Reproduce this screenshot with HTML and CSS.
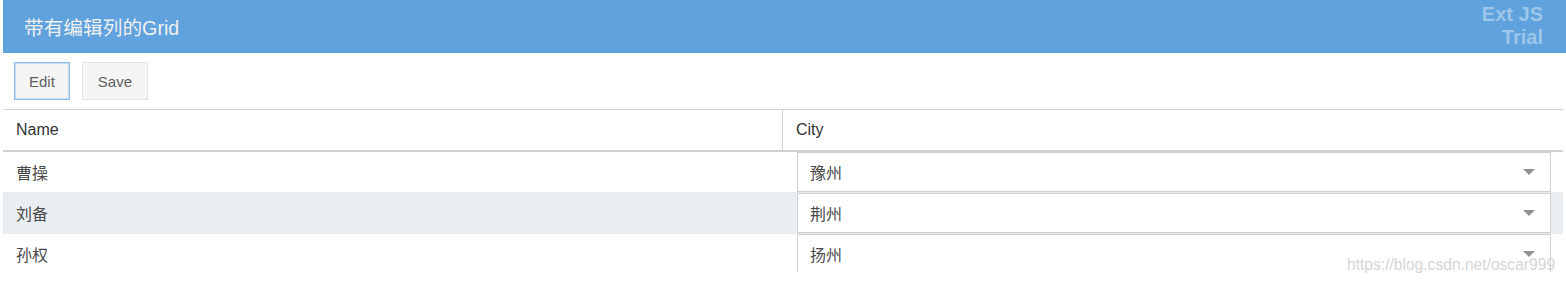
FILE: index.html
```html
<!DOCTYPE html>
<html lang="zh-CN">
<head>
    <meta charset="UTF-8">
    <meta name="viewport" content="width=device-width, initial-scale=1.0">
    <title>带有编辑列的Grid</title>
    <link rel="stylesheet" href="styles.css">
</head>

<body>
    <div class="panel">
        <div class="panel-header">
            <span class="panel-title">带有编辑列的Grid</span>
            <!-- trial badge sits over the header -->
            <div class="trial">Ext JS<br>Trial</div>
        </div>
        <div class="toolbar">
            <button class="btn focused">Edit</button>
            <button class="btn">Save</button>
        </div>
        <div class="grid">
            <div class="grid-head">
                <div class="col col-name">Name</div>
                <div class="col col-city">City</div>
            </div>
            <div class="grid-body">
                <div class="row">
                    <div class="cell col-name">曹操</div>
                    <div class="cell col-city">
                        <div class="combo"><span class="combo-value">豫州</span><span class="combo-trigger"></span></div>
                    </div>
                </div>
                <div class="row alt">
                    <div class="cell col-name">刘备</div>
                    <div class="cell col-city">
                        <div class="combo"><span class="combo-value">荆州</span><span class="combo-trigger"></span></div>
                    </div>
                </div>
                <div class="row">
                    <div class="cell col-name">孙权</div>
                    <div class="cell col-city">
                        <div class="combo"><span class="combo-value">扬州</span><span class="combo-trigger"></span></div>
                    </div>
                </div>
            </div>
        </div>
    </div>
    <div class="watermark">https://blog.csdn.net/oscar999</div>
</body>

</html>
```

FILE: styles.css
```css
html, body {
    margin: 0;
    background: white;
}
body {
    position: relative;
    height: 285px;
    overflow: hidden;
    font-family: "Liberation Sans", Arial, "Noto Sans CJK SC", sans-serif;
    color: #404040;
}

.panel {
    margin-left: 3px;
    width: 1560px;
}

.panel-header {
    position: relative;
    display: flex;
    align-items: center;
    height: 53px;
    margin-right: -3px;
    padding-left: 21px;
    background-color: #5fa2dd;
}

.panel-title {
    color: #f0f0f0;
    font-size: 19.7px;
}

.trial {
    position: absolute;
    right: 23px;
    top: 3px;
    color: #9ec6ea;
    font-family: "Liberation Sans", Arial, sans-serif;
    font-weight: bold;
    font-size: 20px;
    line-height: 23px;
    text-align: right;
}

.toolbar {
    display: flex;
    gap: 12px;
    height: 57px;
    padding: 9px 0 0 11px;
    box-sizing: border-box;
    border-bottom: 1px solid #d0d0d0;
}

.btn {
    height: 38px;
    padding: 0 15px;
    background-color: #f5f5f5;
    border: 1px solid #e4e4e4;
    color: #606060;
    font-family: inherit;
    font-size: 15px;
}

.btn.focused {
    padding: 0 14px;
    border-color: #8fbceb;
    box-shadow: inset 0 0 0 1px #c5ddf4;
}

.grid-head {
    display: flex;
    height: 40px;
    border-bottom: 2px solid #d0d0d0;
    color: #333;
    font-size: 16px;
}

.col {
    display: flex;
    align-items: center;
    padding-left: 13px;
    box-sizing: border-box;
}

.col-name {
    width: 780px;
}

.grid-head .col-name {
    border-right: 1px solid #d0d0d0;
}

.col-city {
    flex: 1;
}

.grid-body {
    height: 120px;
    overflow: hidden;
}

.row {
    display: flex;
    height: 41px;
    border-bottom: 1px solid #e9e9e9;
    box-sizing: border-box;
    font-size: 16px;
    color: #4a4a4a;
}

.row.alt {
    background-color: #e9eef2;
}

.cell {
    display: flex;
    align-items: center;
    padding-left: 13px;
    box-sizing: border-box;
}

.row .col-name {
    width: 781px;
}

.row .col-city {
    padding: 0 12px 0 13px;
}

.combo {
    display: flex;
    align-items: center;
    flex: 1;
    height: 40px;
    box-sizing: border-box;
    border: 1px solid #d0d0d0;
    background: white;
    padding-left: 12px;
}

.combo-value {
    flex: 1;
}

.combo-trigger {
    width: 0;
    height: 0;
    margin-right: 15px;
    border-left: 6px solid transparent;
    border-right: 6px solid transparent;
    border-top: 6px solid #919191;
}

.watermark {
    position: absolute;
    left: 1347px;
    top: 256px;
    color: #d6d6d6;
    font-size: 15.6px;
    white-space: nowrap;
}
```
